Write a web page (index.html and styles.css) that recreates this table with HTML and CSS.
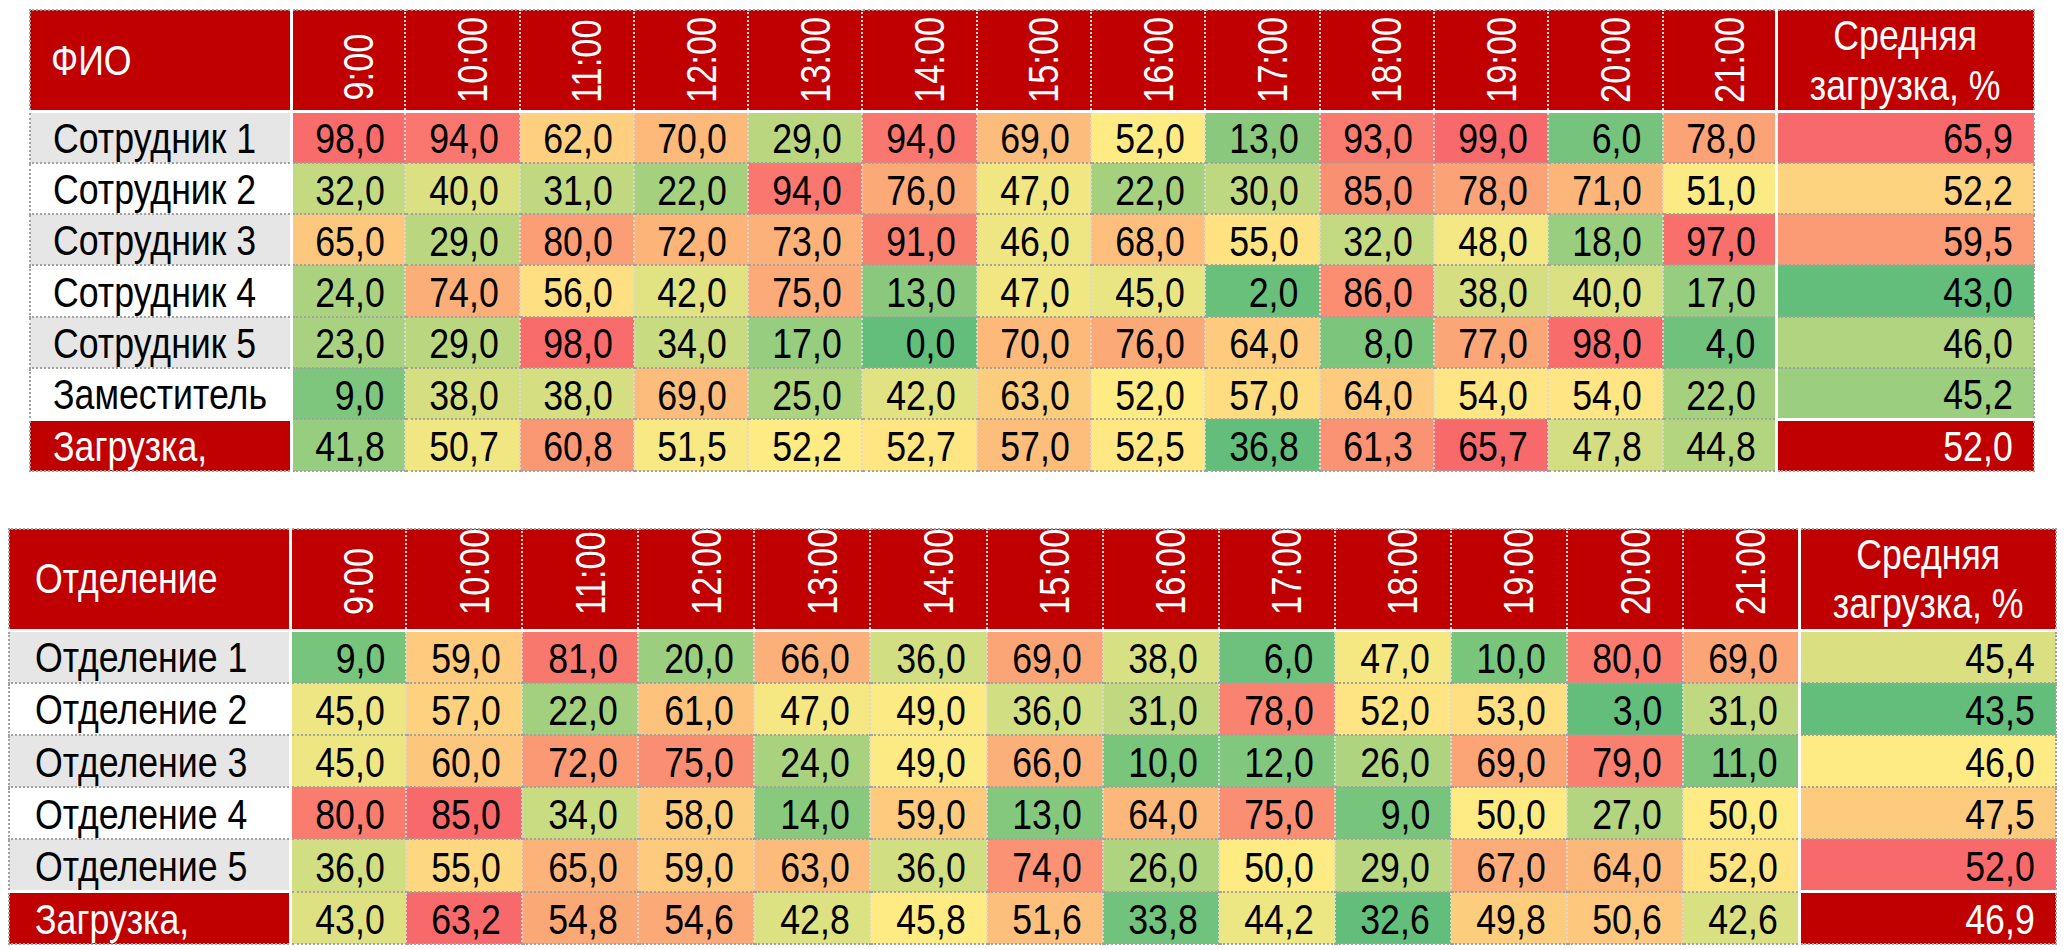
FILE: index.html
```html
<!DOCTYPE html>
<html lang="ru">
<head>
<meta charset="utf-8">
<title>Загрузка</title>
<link rel="stylesheet" href="styles.css">
</head>
<body>
<main class="page">
<table class="grid grid-staff">
<colgroup><col class="c-lbl"><col span="13" class="c-hr"><col class="c-avg"></colgroup>
<thead>
<tr class="head"><th class="lbl"><span class="tx">ФИО</span></th><th class="hr"><span>9:00</span></th><th class="hr"><span>10:00</span></th><th class="hr"><span>11:00</span></th><th class="hr"><span>12:00</span></th><th class="hr"><span>13:00</span></th><th class="hr"><span>14:00</span></th><th class="hr"><span>15:00</span></th><th class="hr"><span>16:00</span></th><th class="hr"><span>17:00</span></th><th class="hr"><span>18:00</span></th><th class="hr"><span>19:00</span></th><th class="hr"><span>20:00</span></th><th class="hr"><span>21:00</span></th><th class="avg-h"><span class="tx">Средняя<br>загрузка, %</span></th></tr>
</thead>
<tbody>
<tr class="row odd"><th class="lbl"><span class="tx">Сотрудник 1</span></th><td class="h"><span class="tx">98,0</span></td><td class="h"><span class="tx">94,0</span></td><td class="h"><span class="tx">62,0</span></td><td class="h"><span class="tx">70,0</span></td><td class="h"><span class="tx">29,0</span></td><td class="h"><span class="tx">94,0</span></td><td class="h"><span class="tx">69,0</span></td><td class="h"><span class="tx">52,0</span></td><td class="h"><span class="tx">13,0</span></td><td class="h"><span class="tx">93,0</span></td><td class="h"><span class="tx">99,0</span></td><td class="h"><span class="tx">6,0</span></td><td class="h"><span class="tx">78,0</span></td><td class="a"><span class="tx">65,9</span></td></tr>
<tr class="row"><th class="lbl"><span class="tx">Сотрудник 2</span></th><td class="h"><span class="tx">32,0</span></td><td class="h"><span class="tx">40,0</span></td><td class="h"><span class="tx">31,0</span></td><td class="h"><span class="tx">22,0</span></td><td class="h"><span class="tx">94,0</span></td><td class="h"><span class="tx">76,0</span></td><td class="h"><span class="tx">47,0</span></td><td class="h"><span class="tx">22,0</span></td><td class="h"><span class="tx">30,0</span></td><td class="h"><span class="tx">85,0</span></td><td class="h"><span class="tx">78,0</span></td><td class="h"><span class="tx">71,0</span></td><td class="h"><span class="tx">51,0</span></td><td class="a"><span class="tx">52,2</span></td></tr>
<tr class="row odd"><th class="lbl"><span class="tx">Сотрудник 3</span></th><td class="h"><span class="tx">65,0</span></td><td class="h"><span class="tx">29,0</span></td><td class="h"><span class="tx">80,0</span></td><td class="h"><span class="tx">72,0</span></td><td class="h"><span class="tx">73,0</span></td><td class="h"><span class="tx">91,0</span></td><td class="h"><span class="tx">46,0</span></td><td class="h"><span class="tx">68,0</span></td><td class="h"><span class="tx">55,0</span></td><td class="h"><span class="tx">32,0</span></td><td class="h"><span class="tx">48,0</span></td><td class="h"><span class="tx">18,0</span></td><td class="h"><span class="tx">97,0</span></td><td class="a"><span class="tx">59,5</span></td></tr>
<tr class="row"><th class="lbl"><span class="tx">Сотрудник 4</span></th><td class="h"><span class="tx">24,0</span></td><td class="h"><span class="tx">74,0</span></td><td class="h"><span class="tx">56,0</span></td><td class="h"><span class="tx">42,0</span></td><td class="h"><span class="tx">75,0</span></td><td class="h"><span class="tx">13,0</span></td><td class="h"><span class="tx">47,0</span></td><td class="h"><span class="tx">45,0</span></td><td class="h"><span class="tx">2,0</span></td><td class="h"><span class="tx">86,0</span></td><td class="h"><span class="tx">38,0</span></td><td class="h"><span class="tx">40,0</span></td><td class="h"><span class="tx">17,0</span></td><td class="a"><span class="tx">43,0</span></td></tr>
<tr class="row odd"><th class="lbl"><span class="tx">Сотрудник 5</span></th><td class="h"><span class="tx">23,0</span></td><td class="h"><span class="tx">29,0</span></td><td class="h"><span class="tx">98,0</span></td><td class="h"><span class="tx">34,0</span></td><td class="h"><span class="tx">17,0</span></td><td class="h"><span class="tx">0,0</span></td><td class="h"><span class="tx">70,0</span></td><td class="h"><span class="tx">76,0</span></td><td class="h"><span class="tx">64,0</span></td><td class="h"><span class="tx">8,0</span></td><td class="h"><span class="tx">77,0</span></td><td class="h"><span class="tx">98,0</span></td><td class="h"><span class="tx">4,0</span></td><td class="a"><span class="tx">46,0</span></td></tr>
<tr class="row"><th class="lbl"><span class="tx">Заместитель</span></th><td class="h"><span class="tx">9,0</span></td><td class="h"><span class="tx">38,0</span></td><td class="h"><span class="tx">38,0</span></td><td class="h"><span class="tx">69,0</span></td><td class="h"><span class="tx">25,0</span></td><td class="h"><span class="tx">42,0</span></td><td class="h"><span class="tx">63,0</span></td><td class="h"><span class="tx">52,0</span></td><td class="h"><span class="tx">57,0</span></td><td class="h"><span class="tx">64,0</span></td><td class="h"><span class="tx">54,0</span></td><td class="h"><span class="tx">54,0</span></td><td class="h"><span class="tx">22,0</span></td><td class="a"><span class="tx">45,2</span></td></tr>
<tr class="row total"><th class="lbl"><span class="tx">Загрузка,</span></th><td class="t"><span class="tx">41,8</span></td><td class="t"><span class="tx">50,7</span></td><td class="t"><span class="tx">60,8</span></td><td class="t"><span class="tx">51,5</span></td><td class="t"><span class="tx">52,2</span></td><td class="t"><span class="tx">52,7</span></td><td class="t"><span class="tx">57,0</span></td><td class="t"><span class="tx">52,5</span></td><td class="t"><span class="tx">36,8</span></td><td class="t"><span class="tx">61,3</span></td><td class="t"><span class="tx">65,7</span></td><td class="t"><span class="tx">47,8</span></td><td class="t"><span class="tx">44,8</span></td><td class="tavg"><span class="tx">52,0</span></td></tr>
</tbody>
</table>

<table class="grid grid-dept">
<colgroup><col class="c-lbl"><col span="13" class="c-hr"><col class="c-avg"></colgroup>
<thead>
<tr class="head"><th class="lbl"><span class="tx">Отделение</span></th><th class="hr"><span>9:00</span></th><th class="hr"><span>10:00</span></th><th class="hr"><span>11:00</span></th><th class="hr"><span>12:00</span></th><th class="hr"><span>13:00</span></th><th class="hr"><span>14:00</span></th><th class="hr"><span>15:00</span></th><th class="hr"><span>16:00</span></th><th class="hr"><span>17:00</span></th><th class="hr"><span>18:00</span></th><th class="hr"><span>19:00</span></th><th class="hr"><span>20:00</span></th><th class="hr"><span>21:00</span></th><th class="avg-h"><span class="tx">Средняя<br>загрузка, %</span></th></tr>
</thead>
<tbody>
<tr class="row odd"><th class="lbl"><span class="tx">Отделение 1</span></th><td class="h"><span class="tx">9,0</span></td><td class="h"><span class="tx">59,0</span></td><td class="h"><span class="tx">81,0</span></td><td class="h"><span class="tx">20,0</span></td><td class="h"><span class="tx">66,0</span></td><td class="h"><span class="tx">36,0</span></td><td class="h"><span class="tx">69,0</span></td><td class="h"><span class="tx">38,0</span></td><td class="h"><span class="tx">6,0</span></td><td class="h"><span class="tx">47,0</span></td><td class="h"><span class="tx">10,0</span></td><td class="h"><span class="tx">80,0</span></td><td class="h"><span class="tx">69,0</span></td><td class="a"><span class="tx">45,4</span></td></tr>
<tr class="row"><th class="lbl"><span class="tx">Отделение 2</span></th><td class="h"><span class="tx">45,0</span></td><td class="h"><span class="tx">57,0</span></td><td class="h"><span class="tx">22,0</span></td><td class="h"><span class="tx">61,0</span></td><td class="h"><span class="tx">47,0</span></td><td class="h"><span class="tx">49,0</span></td><td class="h"><span class="tx">36,0</span></td><td class="h"><span class="tx">31,0</span></td><td class="h"><span class="tx">78,0</span></td><td class="h"><span class="tx">52,0</span></td><td class="h"><span class="tx">53,0</span></td><td class="h"><span class="tx">3,0</span></td><td class="h"><span class="tx">31,0</span></td><td class="a"><span class="tx">43,5</span></td></tr>
<tr class="row odd"><th class="lbl"><span class="tx">Отделение 3</span></th><td class="h"><span class="tx">45,0</span></td><td class="h"><span class="tx">60,0</span></td><td class="h"><span class="tx">72,0</span></td><td class="h"><span class="tx">75,0</span></td><td class="h"><span class="tx">24,0</span></td><td class="h"><span class="tx">49,0</span></td><td class="h"><span class="tx">66,0</span></td><td class="h"><span class="tx">10,0</span></td><td class="h"><span class="tx">12,0</span></td><td class="h"><span class="tx">26,0</span></td><td class="h"><span class="tx">69,0</span></td><td class="h"><span class="tx">79,0</span></td><td class="h"><span class="tx">11,0</span></td><td class="a"><span class="tx">46,0</span></td></tr>
<tr class="row"><th class="lbl"><span class="tx">Отделение 4</span></th><td class="h"><span class="tx">80,0</span></td><td class="h"><span class="tx">85,0</span></td><td class="h"><span class="tx">34,0</span></td><td class="h"><span class="tx">58,0</span></td><td class="h"><span class="tx">14,0</span></td><td class="h"><span class="tx">59,0</span></td><td class="h"><span class="tx">13,0</span></td><td class="h"><span class="tx">64,0</span></td><td class="h"><span class="tx">75,0</span></td><td class="h"><span class="tx">9,0</span></td><td class="h"><span class="tx">50,0</span></td><td class="h"><span class="tx">27,0</span></td><td class="h"><span class="tx">50,0</span></td><td class="a"><span class="tx">47,5</span></td></tr>
<tr class="row odd"><th class="lbl"><span class="tx">Отделение 5</span></th><td class="h"><span class="tx">36,0</span></td><td class="h"><span class="tx">55,0</span></td><td class="h"><span class="tx">65,0</span></td><td class="h"><span class="tx">59,0</span></td><td class="h"><span class="tx">63,0</span></td><td class="h"><span class="tx">36,0</span></td><td class="h"><span class="tx">74,0</span></td><td class="h"><span class="tx">26,0</span></td><td class="h"><span class="tx">50,0</span></td><td class="h"><span class="tx">29,0</span></td><td class="h"><span class="tx">67,0</span></td><td class="h"><span class="tx">64,0</span></td><td class="h"><span class="tx">52,0</span></td><td class="a"><span class="tx">52,0</span></td></tr>
<tr class="row total"><th class="lbl"><span class="tx">Загрузка,</span></th><td class="t"><span class="tx">43,0</span></td><td class="t"><span class="tx">63,2</span></td><td class="t"><span class="tx">54,8</span></td><td class="t"><span class="tx">54,6</span></td><td class="t"><span class="tx">42,8</span></td><td class="t"><span class="tx">45,8</span></td><td class="t"><span class="tx">51,6</span></td><td class="t"><span class="tx">33,8</span></td><td class="t"><span class="tx">44,2</span></td><td class="t"><span class="tx">32,6</span></td><td class="t"><span class="tx">49,8</span></td><td class="t"><span class="tx">50,6</span></td><td class="t"><span class="tx">42,6</span></td><td class="tavg"><span class="tx">46,9</span></td></tr>
</tbody>
</table>
</main>
<script src="app.js"></script>
</body>
</html>
```

FILE: styles.css
```css
html, body {
  margin: 0;
  padding: 0;
  background: #ffffff;
}

body {
  font-family: "Liberation Sans", Arial, sans-serif;
  color: #000;
}

.page {
  display: flex;
  flex-direction: column;
  align-items: flex-start;
}

.grid {
  border-collapse: collapse;
  table-layout: fixed;
  font-size: 42px;
  line-height: 1;
}

/* narrow (Arial Narrow-like) rendering of the text */
.tx {
  display: inline-block;
  transform: scaleX(0.85);
  transform-origin: 100% 50%;
}

.grid-staff {
  margin: 9px 0 0 29px;
  width: 2004px;
}

.grid-staff .c-lbl { width: 261px; }
.grid-staff .c-hr { width: 114.3px; }
.grid-staff .c-avg { width: 257px; }

.grid-dept {
  margin: 56px 0 0 8px;
  width: 2047px;
}

.grid-dept .c-lbl { width: 281px; }
.grid-dept .c-hr { width: 116.1px; }
.grid-dept .c-avg { width: 257px; }

.grid th,
.grid td {
  padding: 0;
  border: 2px dotted #a2a2a2;
  white-space: nowrap;
  font-weight: normal;
}

/* header */
.head th {
  background: #c00000;
  color: #ffffff;
  border-left: 2px dotted #f3dada;
  border-right: 2px dotted #f3dada;
  border-top: 2px dotted #a2a2a2;
  border-bottom: 3px solid #ffffff;
}

.grid-staff .head { height: 99px; }
.grid-dept .head { height: 100px; }

.head .lbl {
  text-align: left;
  vertical-align: middle;
  border-left: 2px dotted #a2a2a2;
  border-right: 3px solid #ffffff;
}

.lbl .tx {
  transform-origin: 0 50%;
}

.grid-staff .head .lbl { padding-left: 20px; }
.grid-dept .head .lbl { padding-left: 25px; }

.head .hr {
  vertical-align: bottom;
  text-align: center;
  padding: 0 0 0 21px;
}

.grid-dept .head .hr {
  padding-bottom: 7px;
}

.hr span {
  display: inline-block;
  writing-mode: vertical-rl;
  line-height: 1;
  transform: rotate(180deg) scaleY(0.82);
}

.grid-staff .hr span { height: 88px; transform-origin: 50% 48.35px; }
.grid-dept .hr span { height: 82px; transform-origin: 50% 45px; }

.avg-h {
  text-align: center;
  vertical-align: middle;
  line-height: 1.18;
}

.head .avg-h {
  border-left: 3px solid #ffffff;
  border-right: 2px dotted #a2a2a2;
}

.avg-h .tx {
  transform-origin: 50% 50%;
}

/* body */
.grid-staff .row { height: 51.3px; }
.grid-dept .row { height: 52.3px; }

.row .lbl {
  text-align: left;
  vertical-align: middle;
  background: #ffffff;
  border-right: 3px solid #ffffff;
  padding-top: 3px;
}

.row.odd .lbl {
  background: #e6e6e6;
}

.grid-staff .row .lbl { padding-left: 22px; }
.grid-dept .row .lbl { padding-left: 25px; }

.row td {
  text-align: right;
  vertical-align: middle;
  padding: 4px 20px 0 0;
  border-left-color: #d9d9d9;
  border-right-color: #d9d9d9;
}

.row .a,
.row .tavg {
  border-left: 3px solid #ffffff;
  border-right-color: #a2a2a2;
  padding-right: 20px;
}

.total .lbl {
  background: #c00000;
  color: #ffffff;
  border-top: 3px solid #ffffff;
}

.total .tavg {
  background: #c00000;
  color: #ffffff;
  border-top: 3px solid #ffffff;
}
```

FILE: app.js
```js
(function () {
  var GREEN = [99, 190, 123];
  var YELLOW = [255, 235, 132];
  var RED = [248, 105, 107];

  function mix(a, b, t) {
    return a.map(function (v, i) { return Math.round(v + (b[i] - v) * t); });
  }

  function median(values) {
    var s = values.slice().sort(function (a, b) { return a - b; });
    var n = s.length;
    return n % 2 ? s[(n - 1) / 2] : (s[n / 2 - 1] + s[n / 2]) / 2;
  }

  document.querySelectorAll('table.grid').forEach(function (table) {
    ['h', 't', 'a'].forEach(function (cls) {
      var cells = Array.prototype.slice.call(table.querySelectorAll('td.' + cls));
      if (!cells.length) return;
      var vals = cells.map(function (c) { return parseFloat(c.textContent.replace(',', '.')); });
      var mn = Math.min.apply(null, vals);
      var mx = Math.max.apply(null, vals);
      var md = median(vals);
      cells.forEach(function (c, i) {
        var v = vals[i];
        var col;
        if (v <= md) {
          col = mix(GREEN, YELLOW, md === mn ? 1 : (v - mn) / (md - mn));
        } else {
          col = mix(YELLOW, RED, mx === md ? 1 : (v - md) / (mx - md));
        }
        c.style.backgroundColor = 'rgb(' + col.join(',') + ')';
      });
    });
  });
})();
```
